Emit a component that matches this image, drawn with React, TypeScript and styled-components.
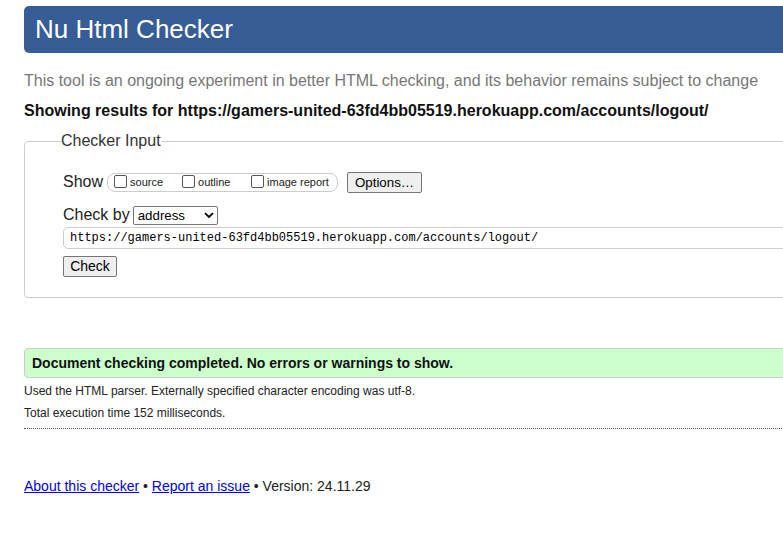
import React from 'react';
import styled, { createGlobalStyle } from 'styled-components';

const GlobalStyle = createGlobalStyle`
  html, body {
    margin: 0;
    padding: 0;
    background: #fff;
    overflow: hidden;
  }
  body {
    font-family: "Liberation Sans", Arial, sans-serif;
    color: #222;
  }
`;

const Page = styled.div`
  width: 1000px;
  padding: 6px 0 0 24px;
  box-sizing: border-box;
`;

const Header = styled.h1`
  margin: 0;
  height: 47px;
  padding: 0 11px;
  background: #365d95;
  border-radius: 5px;
  color: #fff;
  font-size: 26px;
  font-weight: normal;
  line-height: 47px;
`;

const Intro = styled.p`
  margin: 18px 0 0;
  font-size: 16px;
  line-height: 20px;
  color: #777;
`;

const ResultsFor = styled.p`
  margin: 10px 0 0;
  font-size: 16px;
  line-height: 20px;
  font-weight: bold;
  color: #111;
`;

const Fieldset = styled.fieldset`
  margin: 11px 0 0;
  padding: 12px 38px 20px 38px;
  border: 1px solid #ccc;
  border-radius: 4px;
`;

const Legend = styled.legend`
  padding: 0;
  margin-left: -2px;
  font-size: 16px;
  color: #333;
`;

const Row = styled.div`
  display: flex;
  align-items: center;
  font-size: 16px;
  color: #222;
  height: 22px;
`;

const ShowRow = styled(Row)`
  margin-top: 9px;
`;

const CheckRow = styled(Row)`
  margin-top: 11px;
`;

const Label = styled.span`
  font-size: 16px;
  color: #222;
`;

const ShowGroup = styled.div`
  display: flex;
  align-items: center;
  height: 17px;
  margin-left: 4px;
  padding: 0 6px 0 6px;
  border: 1px solid #ccc;
  border-radius: 8px;
`;

const Option = styled.label<{ width: number }>`
  display: flex;
  align-items: center;
  width: ${({ width }) => width}px;
  font-size: 11px;
  color: #222;
`;

const Box = styled.span`
  display: inline-block;
  width: 11px;
  height: 11px;
  border: 1px solid #555;
  border-radius: 2px;
  margin-right: 3px;
  margin-top: -2px;
  background: #fff;
`;

const Button = styled.button`
  font-family: "Liberation Sans", Arial, sans-serif;
  font-size: 13.3px;
  color: #000;
  background: #efefef;
  border: 1px solid #767676;
  border-radius: 2px;
  padding: 1px 6px;
  height: 21px;
  line-height: 17px;
`;

const OptionsButton = styled(Button)`
  margin-left: 9px;
  width: 75px;
`;

const Select = styled.div`
  display: flex;
  align-items: center;
  justify-content: space-between;
  box-sizing: border-box;
  width: 85px;
  height: 19px;
  margin-left: 3px;
  padding: 0 3px 0 4px;
  border: 1px solid #767676;
  border-radius: 2px;
  font-size: 13.3px;
  color: #000;
`;

const UrlInput = styled.div`
  box-sizing: border-box;
  height: 22px;
  margin-top: 1px;
  margin-right: -40px;
  padding: 0 6px;
  border: 1px solid #ccc;
  border-radius: 5px 0 0 5px;
  font-family: "Liberation Mono", "DejaVu Sans Mono", monospace;
  font-size: 12px;
  line-height: 20px;
  color: #000;
`;

const CheckButton = styled(Button)`
  margin-top: 7px;
  width: 54px;
  font-size: 14px;
`;

const Success = styled.div`
  margin-top: 50px;
  height: 30px;
  box-sizing: border-box;
  padding: 0 7px;
  background: #ccffcc;
  border: 1px solid #ccc;
  border-radius: 4px;
  font-size: 14px;
  font-weight: bold;
  line-height: 28px;
  color: #111;
`;

const Details = styled.div`
  margin-top: 2px;
`;

const Detail = styled.p`
  margin: 0;
  font-size: 12px;
  line-height: 22px;
  color: #222;
`;

const Divider = styled.hr`
  margin: 4px 0 0;
  border: 0;
  border-top: 1px dotted #555;
`;

const Footer = styled.p`
  margin: 48px 0 0;
  font-size: 14px;
  line-height: 18px;
  color: #222;
`;

const Link = styled.a`
  color: #00e;
  text-decoration: underline;
`;

const Chevron = () => (
  <svg width="10" height="7" viewBox="0 0 10 7">
    <path d="M1 1.2 L5 5 L9 1.2" fill="none" stroke="#000" strokeWidth="1.8" />
  </svg>
);

export default function App() {
  return (
    <>
      <GlobalStyle />
      <Page>
        <Header>Nu Html Checker</Header>
        <Intro>
          This tool is an ongoing experiment in better HTML checking, and its
          behavior remains subject to change
        </Intro>
        <ResultsFor>
          Showing results for
          https://gamers-united-63fd4bb05519.herokuapp.com/accounts/logout/
        </ResultsFor>
        <Fieldset>
          <Legend>Checker Input</Legend>
          <ShowRow>
            <Label>Show</Label>
            <ShowGroup>
              <Option width={68}>
                <Box />
                source
              </Option>
              <Option width={69}>
                <Box />
                outline
              </Option>
              <Option width={80}>
                <Box />
                image report
              </Option>
            </ShowGroup>
            <OptionsButton>Options…</OptionsButton>
          </ShowRow>
          <CheckRow>
            <Label>Check by</Label>
            <Select>
              address
              <Chevron />
            </Select>
          </CheckRow>
          <UrlInput>
            https://gamers-united-63fd4bb05519.herokuapp.com/accounts/logout/
          </UrlInput>
          <CheckButton>Check</CheckButton>
        </Fieldset>
        <Success>Document checking completed. No errors or warnings to show.</Success>
        <Details>
          <Detail>
            Used the HTML parser. Externally specified character encoding was
            utf-8.
          </Detail>
          <Detail>Total execution time 152 milliseconds.</Detail>
        </Details>
        <Divider />
        <Footer>
          <Link href="#">About this checker</Link> •{' '}
          <Link href="#">Report an issue</Link> • Version: 24.11.29
        </Footer>
      </Page>
    </>
  );
}
